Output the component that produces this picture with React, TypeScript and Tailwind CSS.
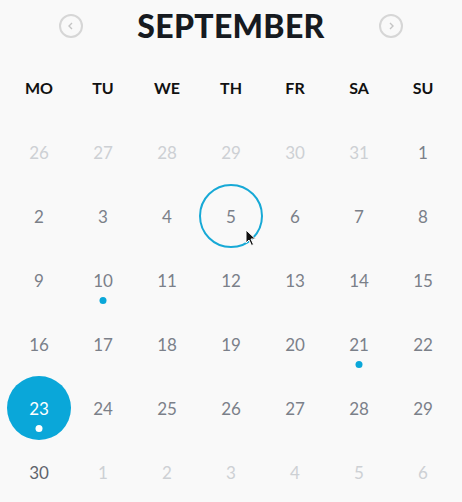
const blue = "bg-[#0aa7d9]"

type Day = { n: number; muted?: boolean; dot?: boolean; selected?: boolean; hover?: boolean; strong?: boolean }

const days: Day[] = [
  { n: 26, muted: true }, { n: 27, muted: true }, { n: 28, muted: true }, { n: 29, muted: true },
  { n: 30, muted: true }, { n: 31, muted: true }, { n: 1 },
  { n: 2 }, { n: 3 }, { n: 4 }, { n: 5, hover: true }, { n: 6 }, { n: 7 }, { n: 8 },
  { n: 9 }, { n: 10, dot: true }, { n: 11 }, { n: 12 }, { n: 13 }, { n: 14 }, { n: 15 },
  { n: 16 }, { n: 17 }, { n: 18 }, { n: 19 }, { n: 20 }, { n: 21, dot: true }, { n: 22 },
  { n: 23, selected: true, dot: true }, { n: 24 }, { n: 25 }, { n: 26 }, { n: 27 }, { n: 28 }, { n: 29 },
  { n: 30, strong: true }, { n: 1, muted: true }, { n: 2, muted: true }, { n: 3, muted: true },
  { n: 4, muted: true }, { n: 5, muted: true }, { n: 6, muted: true },
]

const weekdays = ["MO", "TU", "WE", "TH", "FR", "SA", "SU"]

function Arrow({ dir }: { dir: "left" | "right" }) {
  return (
    <button className="w-6 h-6 rounded-full border-2 border-[#d6d6d6] flex items-center justify-center">
      <svg width="8" height="8" viewBox="0 0 8 8" fill="none" stroke="#c4c4c4" strokeWidth="1.4">
        {dir === "left" ? <path d="M5 1 L2 4 L5 7" /> : <path d="M3 1 L6 4 L3 7" />}
      </svg>
    </button>
  )
}

function Cell({ d }: { d: Day }) {
  let color = "text-[#7b8089]"
  if (d.muted) color = "text-[#cdd0d4]"
  if (d.strong) color = "text-[#5f646c]"
  if (d.selected) color = "text-white"
  return (
    <div className="h-16 flex items-center justify-center relative">
      {d.selected && <div className={`absolute inset-0 rounded-full ${blue}`} />}
      {d.hover && <div className="absolute inset-0 rounded-full border-2 border-[#17a9d6]" />}
      <span className={`relative text-[17px] leading-none ${color}`}>{d.n}</span>
      {d.dot && (
        <span className={`absolute left-1/2 -translate-x-1/2 top-[49px] w-[7px] h-[7px] rounded-full ${d.selected ? "bg-white" : blue}`} />
      )}
      {d.hover && (
        <svg className="absolute left-[46px] top-[45px]" width="12" height="18" viewBox="0 0 12 18">
          <path d="M1 1 L1 14 L4 11 L6.5 16.5 L8.5 15.5 L6 10 L10.5 10 Z" fill="#111" stroke="#fff" strokeWidth="1" />
        </svg>
      )}
    </div>
  )
}

export default function App() {
  return (
    <div className="w-[462px] h-[502px] bg-[#f9f9f9] px-[7px] overflow-hidden" style={{ fontFamily: "Lato, 'Open Sans', sans-serif" }}>
      <div className="h-[48px] flex items-center justify-center pt-[4px]">
        <div className="w-[128px] flex justify-center">
          <Arrow dir="left" />
        </div>
        <h1 className="flex-1 text-center text-[32px] font-black text-[#161a20] tracking-[0.3px] leading-none">SEPTEMBER</h1>
        <div className="w-[128px] flex justify-center">
          <Arrow dir="right" />
        </div>
      </div>
      <div className="grid grid-cols-7 mt-[8px] h-[64px] items-center">
        {weekdays.map((w) => (
          <div key={w} className="text-center text-[16px] font-bold text-[#111]">{w}</div>
        ))}
      </div>
      <div className="grid grid-cols-7">
        {days.map((d, i) => (
          <Cell key={i} d={d} />
        ))}
      </div>
    </div>
  )
}
